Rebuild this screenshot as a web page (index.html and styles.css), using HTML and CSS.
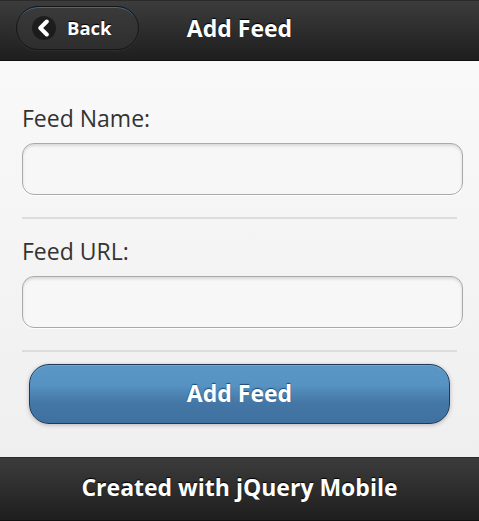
FILE: index.html
```html
<!DOCTYPE html>
<html lang="en">
<head>
<meta charset="utf-8">
<title>Add Feed</title>
<link rel="stylesheet" href="styles.css">
</head>
<body>
<div class="page">
  <header class="bar header">
    <a class="back-btn" href="#">
      <span class="back-icon">
        <svg width="18" height="18" viewBox="0 0 18 18"><path d="M11.8 2.5 L5.3 9 L11.8 15.5" fill="none" stroke="#fff" stroke-width="4" stroke-linecap="round" stroke-linejoin="round"/></svg>
      </span>
      <span class="back-label">Back</span>
    </a>
    <h1 class="title">Add Feed</h1>
  </header>
  <main class="content">
    <div class="field">
      <label class="label" for="name">Feed Name:</label>
      <input class="input" id="name" type="text">
    </div>
    <div class="divider"></div>
    <div class="field">
      <label class="label" for="url">Feed URL:</label>
      <input class="input" id="url" type="text">
    </div>
    <div class="divider divider-last"></div>
    <button class="submit" type="button">Add Feed</button>
  </main>
  <footer class="bar footer">
    <h2 class="footer-title">Created with jQuery Mobile</h2>
  </footer>
</div>
</body>
</html>
```
FILE: styles.css
```css
* { box-sizing: border-box; }
html, body { margin: 0; padding: 0; }
body {
  font-family: "Open Sans", "DejaVu Sans", sans-serif;
  background: #f4f4f4;
  width: 479px;
  height: 521px;
  overflow: hidden;
}
.page {
  display: flex;
  flex-direction: column;
  height: 521px;
}
.bar {
  background: linear-gradient(#3c3c3c, #1e1e1e);
  color: #fff;
  text-shadow: 0 -1px 1px #000;
  border-top: 1px solid #2a2a2a;
  border-bottom: 1px solid #111;
}
.header {
  position: relative;
  height: 61px;
  display: flex;
  align-items: center;
  justify-content: center;
}
.back-btn {
  position: absolute;
  left: 16px;
  top: 5px;
  width: 123px;
  height: 44px;
  border-radius: 22px;
  border: 1px solid #161616;
  background: linear-gradient(#3a3a3a, #2e2e2e);
  box-shadow: inset 0 2px 0 -1px rgba(80,140,200,0.55), 0 1px 2px rgba(255,255,255,0.06);
  display: flex;
  align-items: center;
  padding-left: 15px;
  gap: 11px;
  text-decoration: none;
  color: #fff;
}
.back-icon {
  width: 24px;
  height: 24px;
  border-radius: 50%;
  background: rgba(0,0,0,0.45);
  display: flex;
  align-items: center;
  justify-content: center;
}
.back-icon svg { display: block; }
.back-label {
  font-weight: 700;
  font-size: 18.5px;
  line-height: 1;
}
.title {
  margin: 0 0 4px;
  font-size: 23px;
  font-weight: 700;
  line-height: 1;
}
.content {
  flex: 1;
  background: linear-gradient(#f9f9f9, #efefef);
  padding: 41px 16px 0 22px;
}
.field { display: flex; flex-direction: column; }
.label {
  display: block;
  font-size: 23px;
  line-height: 32px;
  color: #333;
}
.input {
  margin-top: 9px;
  width: 441px;
  height: 52px;
  border: 1px solid #a9a9a9;
  border-radius: 12px;
  background: #f7f7f7;
  box-shadow: inset 0 2px 3px rgba(0,0,0,0.12), 0 1px 0 #fff;
  font: inherit;
  outline: none;
}
.divider {
  margin: 22px 6px 16px 0;
  height: 2px;
  background: #dcdcdc;
}
.divider-last { margin-bottom: 12px; }
.submit {
  display: block;
  margin-left: 7px;
  width: 421px;
  height: 60px;
  border-radius: 20px;
  border: 1px solid #1f3a56;
  background: linear-gradient(#5a96c6 0%, #5692c2 35%, #4477a6 65%, #3e71a0 100%);
  box-shadow: 0 1px 4px rgba(0,0,0,0.25), inset 0 1px 0 rgba(255,255,255,0.15);
  color: #fff;
  font-family: inherit;
  font-weight: 700;
  font-size: 23px;
  text-shadow: 0 -1px 1px #1e4a74;
  padding: 0 0 2px;
}
.footer {
  height: 64px;
  display: flex;
  align-items: center;
  justify-content: center;
}
.footer-title {
  margin: 0 0 4px;
  font-size: 23px;
  font-weight: 700;
  line-height: 1;
}
```
